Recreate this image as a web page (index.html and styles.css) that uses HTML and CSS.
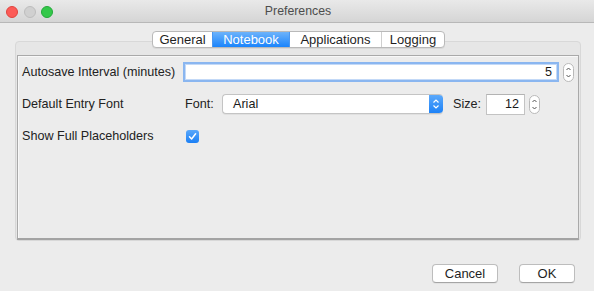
FILE: index.html
```html
<!DOCTYPE html>
<html>
<head>
<meta charset="utf-8">
<link rel="stylesheet" href="styles.css">
</head>
<body>
<div class="titlebar">
  <div class="lights">
    <span class="light red"></span>
    <span class="light gray"></span>
    <span class="light green"></span>
  </div>
  <div class="title">Preferences</div>
  <div></div>
</div>
<div class="content">
  <div class="tabview">
    <div class="tabs">
      <div class="tabstrip">
        <div class="tab tab-general">General</div>
        <div class="tab tab-notebook selected">Notebook</div>
        <div class="tab tab-apps">Applications</div>
        <div class="tab tab-logging">Logging</div>
      </div>
    </div>
    <div class="group">
      <div class="panel">
        <div class="row">
          <div class="label">Autosave Interval (minutes)</div>
          <div class="textfield focused wide">5</div>
          <svg class="stepper" width="11" height="19" viewBox="0 0 11 19">
            <rect x="0.5" y="0.5" width="10" height="18" rx="5" fill="#fff" stroke="#b9b9b9"/>
            <path d="M3.5 7 L5.5 5 L7.5 7" fill="none" stroke="#555" stroke-width="1"/>
            <path d="M3.5 12 L5.5 14 L7.5 12" fill="none" stroke="#555" stroke-width="1"/>
          </svg>
        </div>
        <div class="row">
          <div class="label">Default Entry Font</div>
          <span class="inline-label font-label">Font:</span>
          <div class="select">
            <span class="select-text">Arial</span>
            <span class="select-arrow">
              <svg width="14" height="20" viewBox="0 0 14 20">
                <path d="M4.5 8.5 L7 6 L9.5 8.5" fill="none" stroke="#fff" stroke-width="1.2"/>
                <path d="M4.5 11.5 L7 14 L9.5 11.5" fill="none" stroke="#fff" stroke-width="1.2"/>
              </svg>
            </span>
          </div>
          <span class="inline-label size-label">Size:</span>
          <div class="textfield small">12</div>
          <svg class="stepper" width="11" height="19" viewBox="0 0 11 19">
            <rect x="0.5" y="0.5" width="10" height="18" rx="5" fill="#fff" stroke="#b9b9b9"/>
            <path d="M3.5 7 L5.5 5 L7.5 7" fill="none" stroke="#555" stroke-width="1"/>
            <path d="M3.5 12 L5.5 14 L7.5 12" fill="none" stroke="#555" stroke-width="1"/>
          </svg>
        </div>
        <div class="row">
          <div class="label">Show Full Placeholders</div>
          <span class="checkbox">
            <svg width="13" height="13" viewBox="0 0 13 13">
              <path d="M3.5 6.8 L5.6 9 L9.6 3.8" fill="none" stroke="#fff" stroke-width="1.5" stroke-linecap="round" stroke-linejoin="round"/>
            </svg>
          </span>
        </div>
      </div>
    </div>
  </div>
  <div class="buttons">
    <div class="button cancel">Cancel</div>
    <div class="button ok">OK</div>
  </div>
</div>
</body>
</html>
```
FILE: styles.css
```css
html, body {
  margin: 0;
  padding: 0;
}
body {
  width: 594px;
  height: 291px;
  overflow: hidden;
  background: #ececec;
  font-family: "Liberation Sans", Arial, sans-serif;
  color: #222;
}
.titlebar {
  height: 22px;
  border-bottom: 1px solid #b8b8b8;
  background: linear-gradient(#e9e9e9, #d5d5d5);
  display: grid;
  grid-template-columns: 1fr auto 1fr;
  align-items: center;
}
.lights {
  display: flex;
  gap: 5.5px;
  padding-left: 6px;
  padding-top: 1px;
}
.light {
  width: 12px;
  height: 12px;
  border-radius: 50%;
  box-sizing: border-box;
}
.red { background: #fc5b57; border: 1px solid #e0443e; }
.gray { background: #d0d0d0; border: 1px solid #bdbdbd; }
.green { background: #34c84a; border: 1px solid #23a93a; }
.title {
  font-size: 12.3px;
  color: #4d4d4d;
  padding-left: 2px;
}
.content {
  padding: 8px 0 0 15px;
}
.tabview {
  width: 566px;
}
.tabs {
  display: flex;
  justify-content: center;
  position: relative;
  z-index: 1;
  padding-left: 1px;
}
.tabstrip {
  display: flex;
  height: 17px;
  box-sizing: border-box;
  border: 1px solid #b9b9b9;
  border-radius: 4px;
  background: #fff;
  overflow: hidden;
  box-shadow: 0 1px 0 rgba(0,0,0,0.06);
}
.tab {
  font-size: 13px;
  line-height: 15px;
  text-align: center;
  box-sizing: border-box;
  color: #1f1f1f;
}
.tab + .tab {
  border-left: 1px solid #cfcfcf;
}
.tab-general { width: 59px; }
.tab-notebook { width: 77px; }
.tab-apps { width: 92px; }
.tab-logging { width: 63px; }
.tab.selected {
  background: linear-gradient(#6db3fb, #1a84fc);
  color: #fff;
  border-left-color: #4a97f0;
}
.tab.selected + .tab {
  border-left-color: #4a97f0;
}
.group {
  margin-top: -7px;
  height: 200px;
  box-sizing: border-box;
  border: 1px solid #d8d8d8;
  border-radius: 4px;
  background: #e6e6e6;
  padding: 13px 1px 0 1px;
}
.panel {
  height: 185px;
  box-sizing: border-box;
  border: 1px solid #a9a9a9;
  border-bottom: 2px solid #a3a3a3;
  background: #ececec;
  box-shadow: inset 1px 1px 0 #f8f8f8;
}
.row {
  display: flex;
  align-items: center;
  height: 32px;
}
.label {
  width: 165px;
  box-sizing: border-box;
  padding-left: 4px;
  font-size: 12.6px;
  white-space: nowrap;
}
.textfield {
  box-sizing: border-box;
  background: #fff;
  font-size: 12.6px;
  text-align: right;
  color: #1a1a1a;
}
.textfield.wide {
  width: 376px;
  height: 20px;
  line-height: 16px;
  padding-right: 5px;
  border: 2px solid #8ab6f0;
  box-shadow: inset 0 0 0 1px #c3d9f7;
}
.textfield.small {
  width: 39px;
  height: 21px;
  line-height: 19px;
  padding-right: 5px;
  border: 1px solid #c3c3c3;
  border-top-color: #b3b3b3;
}
.stepper {
  display: block;
  margin-left: 4px;
}
.inline-label {
  font-size: 12.6px;
  white-space: nowrap;
}
.font-label {
  width: 37px;
  padding-left: 2px;
}
.size-label {
  width: 33px;
  margin-left: 10px;
}
.select {
  width: 221px;
  height: 20px;
  box-sizing: border-box;
  display: flex;
  align-items: center;
  background: #fff;
  border: 1px solid #c4c4c4;
  border-right: none;
  border-radius: 4px;
  overflow: hidden;
  box-shadow: 0 1px 0 rgba(0,0,0,0.05);
}
.select-text {
  flex: 1;
  padding-left: 10px;
  font-size: 12.6px;
  line-height: 18px;
  color: #1a1a1a;
}
.select-arrow {
  width: 14px;
  height: 20px;
  display: flex;
  background: linear-gradient(#5fabfb, #1a80f7);
  border-radius: 0 4px 4px 0;
  margin-top: -1px;
  margin-bottom: -1px;
}
.checkbox {
  width: 13px;
  height: 13px;
  margin-left: 3px;
  margin-top: 1px;
  border-radius: 3px;
  background: linear-gradient(#5aa8fb, #1b7ff5);
  display: flex;
}
.buttons {
  display: flex;
  justify-content: flex-end;
  gap: 21px;
  padding-right: 19px;
  margin-top: 23px;
}
.button {
  height: 19px;
  box-sizing: border-box;
  border: 1px solid #bdbdbd;
  border-bottom-color: #a5a5a5;
  border-radius: 4px;
  background: #fff;
  font-size: 13px;
  line-height: 17px;
  text-align: center;
  color: #1f1f1f;
  box-shadow: 0 1px 0 rgba(0,0,0,0.04);
}
.cancel { width: 66px; }
.ok { width: 56px; }
```
